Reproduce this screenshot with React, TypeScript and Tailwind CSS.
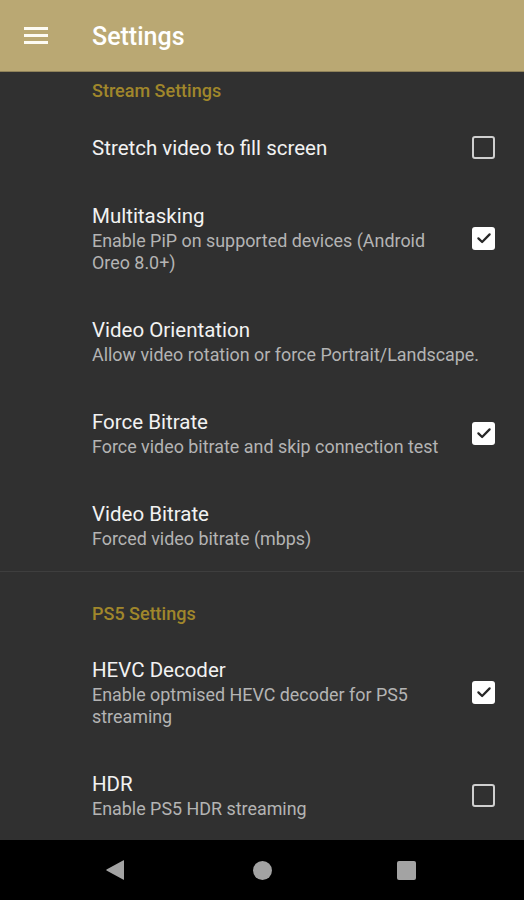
import React from "react";

type Row = {
  title: string;
  sub?: string;
  check?: "on" | "off";
  h: string;
};

function Checkbox({ on }: { on: boolean }) {
  if (on) {
    return (
      <div className="w-[23px] h-[23px] rounded-[3px] bg-[#ffffff] flex items-center justify-center">
        <svg width="18" height="18" viewBox="0 0 24 24">
          <path d="M4.5 12.5l5 4.8L19.5 7.2" fill="none" stroke="#262626" strokeWidth="3" strokeLinecap="round" strokeLinejoin="round" />
        </svg>
      </div>
    );
  }
  return <div className="w-[23px] h-[23px] rounded-[3px] border-[2.5px] border-[#cfcfcf]" />;
}

function SettingRow({ r }: { r: Row }) {
  return (
    <div className={`flex items-center pl-[92px] pr-[29px] pt-[2px] ${r.h}`}>
      <div className="flex-1 min-w-0">
        <div className="text-[20.5px] leading-[24px] text-[#f2f2f2]">{r.title}</div>
        <div className={r.sub ? "text-[17.9px] leading-[22px] text-[#b4b4b4] pr-[4px] mt-[2px]" : "hidden"}>{r.sub}</div>
      </div>
      {r.check && (
        <div className="w-[23px] shrink-0 ml-[12px] mt-[-2px]">
          <Checkbox on={r.check === "on"} />
        </div>
      )}
    </div>
  );
}

export default function App() {
  const stream: Row[] = [
    { title: "Stretch video to fill screen", check: "off", h: "h-[68px]" },
    { title: "Multitasking", sub: "Enable PiP on supported devices (Android Oreo 8.0+)", check: "on", h: "h-[114px]" },
    { title: "Video Orientation", sub: "Allow video rotation or force Portrait/Landscape.", h: "h-[92px]" },
    { title: "Force Bitrate", sub: "Force video bitrate and skip connection test", check: "on", h: "h-[92px]" },
    { title: "Video Bitrate", sub: "Forced video bitrate (mbps)", h: "h-[92px]" },
  ];
  const ps5: Row[] = [
    { title: "HEVC Decoder", sub: "Enable optmised HEVC decoder for PS5 streaming", check: "on", h: "h-[114px]" },
    { title: "HDR", sub: "Enable PS5 HDR streaming", check: "off", h: "h-[92px]" },
  ];
  return (
    <div className="w-[524px] h-[900px] flex flex-col bg-[#303030] overflow-hidden" style={{ fontFamily: "Roboto, 'Noto Sans', sans-serif" }}>
      <div className="h-[72px] shrink-0 bg-[#baa873] border-b border-[#8f825a] flex items-center">
        <div className="w-[92px] pl-[24px] flex flex-col gap-[4px]">
          <div className="w-[24px] h-[3px] bg-[#fdfbf3]" />
          <div className="w-[24px] h-[3px] bg-[#fdfbf3]" />
          <div className="w-[24px] h-[3px] bg-[#fdfbf3]" />
        </div>
        <div className="text-[25px] font-medium text-[#ffffff] leading-[28px] mt-[3px]">Settings</div>
      </div>
      <div className="flex-1 min-h-0 overflow-hidden">
        <div className="pl-[92px] pt-[8px] h-[41px] text-[18px] leading-[22px] font-medium text-[#a0872b]">Stream Settings</div>
        {stream.map((r) => (
          <SettingRow key={r.title} r={r} />
        ))}
        <div className="h-px bg-[#3e3e3e]" />
        <div className="pl-[92px] pt-[31px] h-[63px] text-[18px] leading-[22px] font-medium text-[#a0872b]">PS5 Settings</div>
        {ps5.map((r) => (
          <SettingRow key={r.title} r={r} />
        ))}
      </div>
      <div className="h-[60px] shrink-0 bg-[#000000] flex items-center pl-[105px]">
        <svg width="20" height="22" viewBox="0 0 20 22">
          <path d="M19 1.5 L19 20.5 Q19 21 18.5 20.7 L1.5 11.4 Q1 11 1.5 10.6 L18.5 1.3 Q19 1 19 1.5Z" fill="#a3a3a3" />
        </svg>
        <div className="w-[19px] h-[19px] rounded-full bg-[#a3a3a3] ml-[128px]" />
        <div className="w-[19px] h-[19px] rounded-[2px] bg-[#a3a3a3] ml-[125px]" />
      </div>
    </div>
  );
}
